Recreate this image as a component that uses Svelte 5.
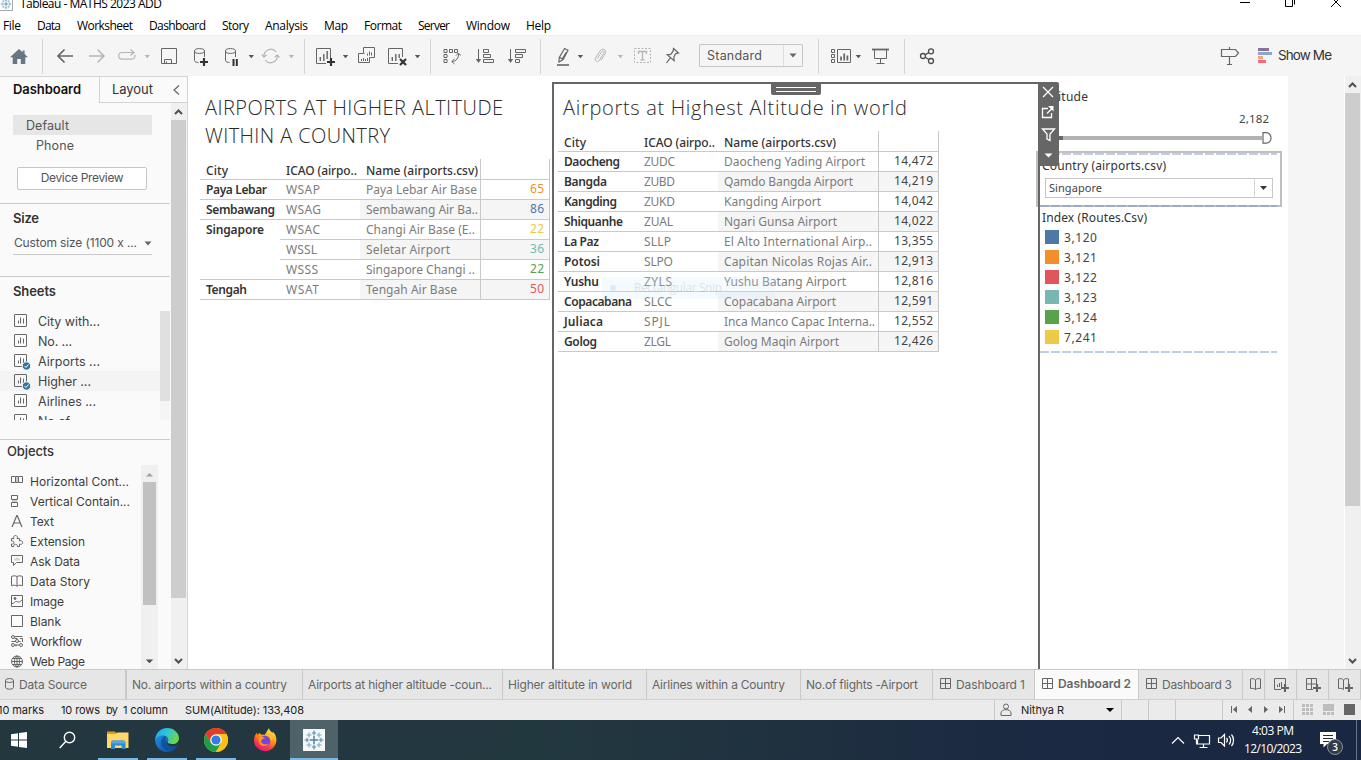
<script>
  function fit(node, width) {
    if (!width) return;
    const natural = node.getBoundingClientRect().width;
    const n = Math.max(1, node.textContent.length - 1);
    node.style.letterSpacing = `${(width - natural) / n}px`;
    node.style.width = `${width}px`;
  }

  const menu = [['File', 18], ['Data', 24], ['Worksheet', 56], ['Dashboard', 57], ['Story', 27], ['Analysis', 43], ['Map', 24], ['Format', 38], ['Server', 32], ['Window', 44], ['Help', 25]];

  const sheets = [
    ['City with...', 62, false], ['No. ...', 34, false], ['Airports ...', 62, true],
    ['Higher ...', 53, true], ['Airlines ...', 58, false], ['No.of ...', 46, false]
  ];

  const objects = [
    ['Horizontal Cont...', 99, 'h'], ['Vertical Contain...', 100, 'v'], ['Text', 24, 'text'],
    ['Extension', 55, 'ext'], ['Ask Data', 50, 'ask'], ['Data Story', 60, 'story'],
    ['Image', 34, 'image'], ['Blank', 31, 'blank'], ['Workflow', 52, 'flow'], ['Web Page', 55, 'web']
  ];

  const local = [
    ['Paya Lebar', 61, 'WSAP', 34, 'Paya Lebar Air Base', 111, '65', '#f28e2b', true],
    ['Sembawang', 69, 'WSAG', 35, 'Sembawang Air Ba..', 112, '86', '#4e79a7', true],
    ['Singapore', 58, 'WSAC', 34, 'Changi Air Base (E..', 109, '22', '#edc948', false],
    ['', 0, 'WSSL', 31, 'Seletar Airport', 84, '36', '#76b7b2', false],
    ['', 0, 'WSSS', 32, 'Singapore Changi ..', 109, '22', '#59a14f', true],
    ['Tengah', 41, 'WSAT', 33, 'Tengah Air Base', 91, '50', '#e15759', true]
  ];

  const world = [
    ['Daocheng', 56, 'ZUDC', 31, 'Daocheng Yading Airport', 141, '14,472'],
    ['Bangda', 43, 'ZUBD', 31, 'Qamdo Bangda Airport', 129, '14,219'],
    ['Kangding', 53, 'ZUKD', 31, 'Kangding Airport', 97, '14,042'],
    ['Shiquanhe', 59, 'ZUAL', 29, 'Ngari Gunsa Airport', 113, '14,022'],
    ['La Paz', 35, 'SLLP', 27, 'El Alto International Airp..', 148, '13,355'],
    ['Potosi', 36, 'SLPO', 29, 'Capitan Nicolas Rojas Air..', 148, '12,913'],
    ['Yushu', 35, 'ZYLS', 28, 'Yushu Batang Airport', 122, '12,816'],
    ['Copacabana', 68, 'SLCC', 28, 'Copacabana Airport', 112, '12,591'],
    ['Juliaca', 39, 'SPJL', 26, 'Inca Manco Capac Interna..', 151, '12,552'],
    ['Golog', 33, 'ZLGL', 27, 'Golog Maqin Airport', 115, '12,426']
  ];

  const legend = [['3,120', '#4e79a7'], ['3,121', '#f28e2b'], ['3,122', '#e15759'], ['3,123', '#76b7b2'], ['3,124', '#59a14f'], ['7,241', '#edc948']];

  const tabs = [
    ['No. airports within a country', 155, 176], ['Airports at higher altitude -coun...', 184, 200],
    ['Higher altitute in world', 124, 144], ['Airlines within a Country', 133, 154], ['No.of flights -Airport', 112, 132]
  ];
</script>

{#snippet t(text, w, cls = '')}<span class="t {cls}" use:fit={w}>{text}</span>{/snippet}
{#snippet caret(x, c = '#555')}<path d="M{x} 55h5.4l-2.7 3.2z" fill={c} stroke="none" />{/snippet}
{#snippet plus(x, y, c = '#333')}<path d="M{x - 4} {y}h8M{x} {y - 4}v8" stroke={c} stroke-width="2.2" />{/snippet}
{#snippet grid()}<svg width="12" height="12" viewBox="0 0 12 12" class="ln"><path d="M.5 .5h10v10H.5zM5.5 .5v10M.5 5.500h10" /></svg>{/snippet}
{#snippet tableau(s)}<svg width={s} height={s} viewBox="0 0 22 22" fill="none"><path stroke="#4b82a8" stroke-width="1.5" d="M11 7v8M7 11h8" /><path stroke="#4e90b4" stroke-width="1.1" d="M11 1.5v5M8.8 4h4.4M11 15.5v5M8.8 18h4.4M1.5 11h5M4 8.8v4.4M15.5 11h5M18 8.8v4.4" /><path stroke="#7faac2" stroke-width="1.1" d="M6 3.5v5M3.5 6h5M16 3.5v5M13.500 6h5M6 13.500v5M3.500 16h5M16 13.500v5M13.500 16h5" /></svg>{/snippet}

<div class="app">
  <header class="title">
    <span class="appicon">{@render tableau(12)}</span>
    {@render t('Tableau - MATHS 2023 ADD', 142)}
    <svg class="winctl" width="121" height="17" viewBox="1240 0 121 17" fill="none" stroke="#000"><path d="M1240 2.5h10M1285.500-1h7v7.500h-7zM1294.500-1v5.500M1331-3l10 10M1341-3l-10 10" /></svg>
  </header>
  <nav class="menu">{#each menu as [m, w]}{@render t(m, w)}{/each}</nav>

  <div class="toolbar">
    <svg width="43" height="40" viewBox="0 36 43 40"><path fill="#687583" d="M19 49l-9 8.200h2.700V64h4.500v-5h3.600v5h4.500v-6.800H28l-3.400-3.200V50.500h-2v1.700z" /><path d="M42.500 39v35" stroke="#d4d4d4" /></svg>
    <svg width="262" height="40" viewBox="43 36 262 40" class="ln">
      <path stroke-width="1.700" d="M73 56H58M64.500 49.500L58 56l6.500 6.500" />
      <g stroke="#b5b5b5"><path stroke-width="1.500" d="M89 56h15M97.500 49.500L104 56l-6.500 6.500" />
        <path stroke-width="1.200" d="M133.500 52.500h-11.500a3.300 3.300 0 0 0 0 6.600h9.800a3.300 3.300 0 0 0 3-4.500M130.500 49.500l3.500 3-3.500 3" /></g>
      {@render caret(144.600, '#b5b5b5')}
      <path d="M161.500 48.500h15v15h-15zM164.500 63.500v-4h7v4M166.500 63.500v-2" />
      <ellipse cx="199.500" cy="51" rx="5" ry="2.400" /><path d="M194.500 51v9.500c0 1.300 2 2 4 2M204.500 51v6" />{@render plus(204, 62)}
      <ellipse cx="230.500" cy="51" rx="5" ry="2.400" /><path d="M225.500 51v9.500c0 1.300 2 2 4 2M235.500 51v6" /><path stroke="#333" stroke-width="2" d="M233.500 59v7M236.800 59v7" />
      {@render caret(248.600)}
      <g stroke="#b5b5b5" stroke-width="1.200"><path d="M264 56.500a6.800 6.800 0 0 1 12.200-4.500M277.300 55.500a6.800 6.800 0 0 1-12.200 4.500" /><path d="M261.800 54.500l2.200 2.500 2.700-2M274.800 57l2.500-2 2.200 2.500" /></g>
      {@render caret(288.700, '#b5b5b5')}
      <path d="M304.500 39v35" stroke="#d4d4d4" />
    </svg>
    <svg width="126" height="40" viewBox="305 36 126 40" class="ln">
      <path d="M326 63.500h-9.500v-15h14V58" /><path stroke-width="1.400" d="M320.300 61v-4M323.800 61v-7M327.200 59v-8" />{@render plus(331, 62)}
      {@render caret(342.800)}
      <path d="M363.500 53v-5.500h11v10h-5M367.500 55.500v-2M369.500 55.500v-4M371.500 55.500v-3M363.500 53.500h-5v9h11v-5M361.500 61v-2M363.500 61v-3M365.500 61v-2M367.500 61v-3M363.500 53.500h1" />
      <path d="M398 63.500h-9.500v-15h14V57" /><path stroke-width="1.400" d="M392.300 61v-4M395.800 61v-7M399.200 58v-4" /><path stroke="#333" stroke-width="2.200" d="M400 59l6 6M406 59l-6 6" />
      {@render caret(414.800)}
      <path d="M430.500 39v35" stroke="#d4d4d4" />
    </svg>
    <svg width="110" height="40" viewBox="431 36 110 40" class="ln">
      <path d="M444 49.500h3v3h-3zM449.500 49.500h3v3h-3zM454.500 49.500h3v3h-3zM444 54.500h3v3h-3zM444 59.500h3v3h-3z" /><path d="M458.500 53.500c.5 4.500-2.500 8-6.500 8M456 55.500l2.500-2.500 2 2.500M454.500 59l-2.700 2.500 2.700 2.500" />
      <path d="M478.500 49v11M483.500 49.500h5v3h-5zM483.500 54.500h7v3h-7zM483.500 59.500h10v3h-10z" /><path d="M475.800 59h5.400l-2.700 4z" fill="#666" stroke="none" />
      <path d="M510.500 49v11M515.500 49.500h10v3h-10zM515.500 54.500h7v3h-7zM515.500 59.500h4v3h-4z" /><path d="M507.800 59h5.400l-2.700 4z" fill="#666" stroke="none" />
      <path d="M540.500 39v35" stroke="#d4d4d4" />
    </svg>
    <svg width="158" height="40" viewBox="541 36 158 40" class="ln">
      <path d="M564.500 48.500l3.500 1.700-5 9.600-4.100 2.200.4-4.500zM559.300 57.200l3.500 1.900M566 52.500l-3.300 5.800" stroke-width="1.200" /><path d="M557 65h12" stroke-width="1.600" />
      {@render caret(577.700)}
      <g stroke="#b5b5b5"><path d="M597.500 58.500l4-6.500c1.200-2 3.300-.8 2.400 1l-4.500 7.200c-1.900 2.800-5.400.7-3.900-2.200l4.700-7.300c2.300-3.300 7-.8 5.100 2.700l-4.200 6.800" />
      <path d="M634.500 48.500h16v14h-16z" stroke-dasharray="2 1.500" /><path stroke-width="1.300" d="M638.500 54v-2.500h8V54M642.500 51.500v8M640.500 59.800h4" /></g>
      {@render caret(617.700, '#b5b5b5')}
      <path d="M673.500 48.500l5 4.500-3 .8-1.600 3.200.2 3.700-6.900-5.900 3.500-.4 2.300-3zM670.300 57.800l-3.800 5.200" stroke-width="1.200" />
    </svg>
    <div class="std">{@render t('Standard', 55)}<i><svg width="8" height="5" viewBox="0 0 8 5"><path d="M.5.500h7L4 4.500z" fill="#666" /></svg></i></div>
    <svg width="102" height="40" viewBox="803 36 102 40" class="ln">
      <path d="M818.500 39v35M904.500 39v35" stroke="#d4d4d4" />
      <path d="M831.500 49.500h3v3h-3zM831.500 54.500h3v3h-3zM831.500 59.500h3v3h-3zM837.500 49.500h13v13h-13z" /><path stroke-width="1.700" d="M841 60.500v-4M844.200 60.500v-7M847.400 60.500v-5" />
      {@render caret(855.700)}
      <path stroke-width="1.800" d="M872 49.500h17" /><path d="M874.500 50v8.500h12V50M880.500 58.500v4.500M876.500 63.500h8" />
    </svg>
    <svg width="345" height="40" viewBox="905 36 345 40" class="ln">
      <g stroke="#4c4c4c" stroke-width="1.300"><circle cx="923" cy="56" r="2.500" /><circle cx="931" cy="51.300" r="2.500" /><circle cx="931" cy="61" r="2.500" /><path d="M925.200 54.700l3.600-2.100M925.200 57.300l3.600 2.200" /></g>
      <path d="M1221.500 49.500h14l3 3.500-3 3.500h-14zM1229.500 47v2.500M1229.500 56.500v8M1227 64.500h5" stroke-width="1.200" />
    </svg>
    <svg width="28" height="40" viewBox="1250 36 28 40"><path fill="#8a6f96" d="M1258 48h11v3h-11z" /><path fill="#86a8cf" d="M1258 52h14v3h-14z" /><path fill="#f5a673" d="M1258 56h5v3h-5z" /><path fill="#fb6a7b" d="M1258 60h8v3h-8z" /></svg>
    <div class="showme">{@render t('Show Me', 54)}</div>
  </div>

  <main>
    <aside>
      <div class="ptabs"><b>{@render t('Dashboard', 68)}</b><div>{@render t('Layout', 41)}<svg width="7" height="10" viewBox="0 0 7 10" class="ln"><path d="M6 .5L1 5l5 4.500" stroke-width="1.200" /></svg></div></div>
      <div class="pbody">
        <div class="pane">
          <section class="device">
            <div class="opt sel">{@render t('Default', 43)}</div>
            <div class="opt ph">{@render t('Phone', 38)}</div>
            <div class="btn">{@render t('Device Preview', 83)}</div>
          </section>
          <section class="size">
            <h4>{@render t('Size', 26)}</h4>
            <div class="combo">{@render t('Custom size (1100 x ...', 123)}<svg width="8" height="5" viewBox="0 0 8 5"><path d="M.5.500h7L4 4.500z" fill="#666" /></svg></div>
          </section>
          <section class="sheets">
            <h4>{@render t('Sheets', 43)}</h4>
            <div class="slist">
              <ul>
                {#each sheets as [name, w, used], i}
                  <li class:hover={i === 3}>
                    <svg width="24" height="20" viewBox="0 0 24 20" class="ln"><rect x="1.500" y="4.500" width="12" height="12" rx=".5" /><path d="M5.500 13.500v-3M7.500 13.500v-6M10.500 13.500v-5" />
                      {#if used}<circle cx="13.500" cy="16" r="4.200" fill="#31789c" stroke="#fafafa" /><path d="M11.500 16l1.500 1.500 2.500-3" stroke="#fff" />{/if}</svg>
                    {@render t(name, w)}
                  </li>
                {/each}
              </ul>
              <i class="sthumb"></i>
            </div>
          </section>
          <section class="objects">
            <h4>{@render t('Objects', 47)}</h4>
            <div class="olist">
              <ul>
                {#each objects as [name, w, kind]}
                  <li>
                    <svg width="20" height="20" viewBox="0 0 20 20" class="ln">
                      {#if kind === 'h'}<path d="M1.500 5.500h4v6h-4zM8.500 5.500h4v6h-4zM6 5.500h2M6 11.500h2" /><path fill="#ccc" stroke="none" d="M6 6h2v5H6z" />
                      {:else if kind === 'v'}<path d="M1.500 4.500h6v4h-6zM1.500 11.500h6v4h-6z" /><path fill="#ccc" stroke="none" d="M2 9h5v2H2z" />
                      {:else if kind === 'text'}<path d="M2 16L6.800 4.500h.4L12 16M4 12h6" stroke-width="1.200" />
                      {:else if kind === 'ext'}<path d="M1.500 7.500H4c-1-1.500 0-3 1.500-3s2.500 1.500 1.500 3h2.500V10c1.500-.8 3.200 0 3.200 1.500S11 13.800 9.500 13v2.500H7.300c.3-1.500-.6-2.200-1.800-2.200s-2 .8-1.700 2.200H1.500V13c2 .3 2.500-.5 2.500-1.500s-.8-1.700-2.500-1.400z" />
                      {:else if kind === 'ask'}<path d="M1.500 4.500h11v7h-6l-3 3v-3h-2z" /><path stroke="#aaa" d="M5 9.500v-2M7 9.500v-3M9 9.500v-2" />
                      {:else if kind === 'story'}<path d="M1.500 5.500c2-1 4-.8 5.500 0 1.500-.8 3.500-1 5.500 0v9.200c-2-.8-4-.6-5.500.4-1.500-1-3.500-1.200-5.500-.4zM7 5.500v9.500" />
                      {:else if kind === 'image'}<path d="M1.500 4.500h11v11h-11zM1.500 12.500c3 .5 3-2.500 5-2 1.800.6 2.500 1.500 6-2" /><circle cx="5" cy="7.500" r="1" fill="#666" />
                      {:else if kind === 'blank'}<path d="M1.500 4.500h11v11h-11z" />
                      {:else if kind === 'flow'}<circle cx="3" cy="6" r="1.500" /><circle cx="7" cy="10" r="1.500" /><circle cx="3" cy="14" r="1.500" /><circle cx="11" cy="14" r="1.500" /><path d="M4.500 5.500h8M4.500 7.500h3M10 7.500h2.500v3.500M1.500 10.500h4M8.500 10.500h2M5 14h4M6 15.500v-2" />
                      {:else}<circle cx="7" cy="10.500" r="5.500" /><ellipse cx="7" cy="10.500" rx="2.500" ry="5.500" /><path d="M1.500 10.500h11M2.500 7.500h9M2.500 13.500h9M7 5v11" />{/if}
                    </svg>
                    {@render t(name, w)}
                  </li>
                {/each}
              </ul>
              <div class="osb"><svg width="9" height="5" viewBox="0 0 9 5"><path d="M1 4.500h7L4.500 1z" fill="#a0a0a0" /></svg><i></i><svg width="9" height="5" viewBox="0 0 9 5"><path d="M.8.500h7.400L4.500 4.300z" fill="#505050" /></svg></div>
            </div>
          </section>
        </div>
        <div class="vsb psb"><svg width="9" height="6" viewBox="0 0 9 6"><path d="M1 5l3.500-3.500L8 5" /></svg><i></i><svg width="9" height="6" viewBox="0 0 9 6"><path d="M1 1l3.500 3.500L8 1" /></svg></div>
      </div>
    </aside>

    <section class="sheet one">
      <h2>{@render t('AIRPORTS AT HIGHER ALTITUDE', 298)}<br />{@render t('WITHIN A COUNTRY', 185)}</h2>
      <div class="grid g1">
        <div class="row head"><span>{@render t('City', 22)}</span><span>{@render t('ICAO (airpo..', 71)}</span><span>{@render t('Name (airports.csv)', 112)}</span><span></span></div>
        {#each local as r, i}
          <div class="row" class:band={i % 2 === 1}>
            <span class="city" class:open={!r[8]}>{@render t(r[0], r[1])}</span><span class="dim">{@render t(r[2], r[3])}</span><span class="dim nm">{@render t(r[4], r[5])}</span><span class="num" style:color={r[7]}>{@render t(r[6], 14)}</span>
          </div>
        {/each}
      </div>
    </section>

    <section class="sheet two">
      <div class="grip"></div>
      <h2>{@render t('Airports at Highest Altitude in world', 344)}</h2>
      <div class="grid g2">
        <div class="row head"><span>{@render t('City', 22)}</span><span>{@render t('ICAO (airpo..', 71)}</span><span>{@render t('Name (airports.csv)', 112)}</span><span></span></div>
        {#each world as r, i}
          <div class="row" class:band={i % 2 === 1}>
            <span class="city">{@render t(r[0], r[1])}</span><span class="dim">{@render t(r[2], r[3])}</span><span class="dim nm">{@render t(r[4], r[5])}</span><span class="num">{@render t(r[6], 39)}</span>
          </div>
        {/each}
      </div>
      <div class="snip"><i></i>{@render t('Rectangular Snip', 88)}</div>
      <div class="tools">
        <svg width="21" height="84" viewBox="0 0 21 84" fill="none" stroke="#fff" stroke-width="1.300"><path d="M5 5l10 10M15 5l-10 10M10 26.500H4.500v9h9V31M9 31.500l5-5" /><path d="M10 24h5.500v5.500z" fill="#fff" stroke="none" /><path d="M4.500 47h12l-4.500 5v6.500l-3-1.500v-5z" /><path d="M6.500 71.500h8l-4 4z" fill="#fff" stroke="none" /></svg>
      </div>
    </section>

    <section class="filters">
      <div class="lbl alt">{@render t('Altitude', 46)}</div>
      <div class="val">{@render t('2,182', 30)}</div>
      <div class="slider"><i></i><svg width="10" height="12" viewBox="0 0 10 12"><path d="M1 .7h3.500a4.500 5.200 0 0 1 0 10.500H1z" fill="#fff" stroke="#666" stroke-width="1.200" /></svg></div>
      <div class="country">
        <div class="dash"></div>
        <div class="lbl">{@render t('Country (airports.csv)', 124)}</div>
        <div class="pick">{@render t('Singapore', 53)}<i><svg width="7" height="4" viewBox="0 0 7 4"><path d="M0 0h7L3.500 4z" fill="#333" /></svg></i></div>
        <div class="dash low"></div>
      </div>
      <div class="lbl idx">{@render t('Index (Routes.Csv)', 105)}</div>
      {#each legend as [v, c]}<div class="key"><i style:background={c}></i>{@render t(v, 33)}</div>{/each}
      <div class="dash last"></div>
    </section>
    <div class="gutter"></div>
    <div class="vsb msb"><svg width="9" height="6" viewBox="0 0 9 6"><path d="M1 5l3.500-3.500L8 5" /></svg><i></i><svg width="9" height="6" viewBox="0 0 9 6"><path d="M1 1l3.500 3.500L8 1" /></svg></div>
  </main>

  <div class="tabs">
    <div class="src"><svg width="9" height="12" viewBox="0 0 9 12" class="ln"><ellipse cx="4.500" cy="2.500" rx="4" ry="2" /><path d="M.5 2.500v6.800c0 2.500 8 2.500 8 0V2.500" /></svg>{@render t('Data Source', 68)}</div>
    {#each tabs as [name, w, tw]}<div class="tab" style:width="{tw}px">{@render t(name, w)}</div>{/each}
    <div class="tab dash1">{@render grid()}{@render t('Dashboard 1', 69)}</div>
    <div class="tab dash2">{@render grid()}{@render t('Dashboard 2', 73)}</div>
    <div class="tab dash3">{@render grid()}{@render t('Dashboard 3', 70)}</div>
    <svg width="118" height="29" viewBox="1243 670 118 29" class="ln">
      <path d="M1250.500 679c2-.8 3.500-.3 5 .8 1.500-1.100 3-1.600 5-.8v9.500c-2-.5-3.500 0-5 1-1.500-1-3-1.500-5-1zM1255.500 680v9.500" />
      <path d="M1281 689.500h-6.500v-11h11v7M1277.500 687v-2.500M1279.500 687v-4M1281.500 687v-5" />{@render plus(1285, 688, '#666')}
      <path d="M1313 689.500h-6.500v-11h10v7M1311.500 678.500v10.500M1306.500 684h10" />{@render plus(1317, 688, '#666')}
      <path d="M1343.500 689.500c-1.500-1-3-1.500-5-1V679c2-.8 3.500-.3 5 .8 1.500-1.100 3-1.600 5-.8v6M1343.500 680v9.500" />{@render plus(1349, 688, '#666')}
      <path d="M1264.500 670v29M1296.500 670v29M1328.500 670v29M1360.500 670v29" stroke="#c9c9c9" />
    </svg>
  </div>

  <div class="status">
    {@render t('10 marks', 46)}{@render t('10 rows', 39)}{@render t('by', 12)}{@render t('1 column', 45)}{@render t('SUM(Altitude): 133,408', 119)}
    <div class="user"><svg width="12" height="14" viewBox="0 0 12 14" class="ln"><circle cx="6" cy="3.500" r="2.500" /><path d="M1 12.500V10c0-4.500 10-4.500 10 0v2.500z" /></svg>{@render t('Nithya R', 43)}<svg width="8" height="4" viewBox="0 0 8 4"><path d="M0 0h8L4 4z" /></svg></div>
    <svg width="239" height="20" viewBox="1122 700 239 20"><path d="M1148.500 700v20M1175.500 700v20M1222.500 700v20M1293.500 700v20" stroke="#c9c9c9" />
      <path fill="#666" d="M1231 706h1v7h-1zM1237 706v7l-4-3.500zM1252 706v7l-4-3.500zM1264 706v7l4-3.500zM1279 706v7l4-3.500zM1284 706h1v7h-1zM1344 704h11v11h-11z" />
      <path fill="#bdbdbd" d="M1302 704h3v3h-3zM1306 704h3v3h-3zM1310 704h3v3h-3zM1302 708h3v3h-3zM1306 708h3v3h-3zM1310 708h3v3h-3zM1302 712h3v3h-3zM1306 712h3v3h-3zM1310 712h3v3h-3zM1323 704h11v7h-11zM1323 712h3v3h-3zM1327 712h3v3h-3zM1331 712h3v3h-3z" /></svg>
  </div>

  <footer>
    <svg width="98" height="40" viewBox="0 720 98 40"><path fill="#fff" d="M11 734.300l7-1v6.200h-7zM19 733.100l8-1.100v7.500h-8zM11 740.500h7v6.200l-7-1zM19 740.500h8v7.500l-8-1.100z" /><g fill="none" stroke="#fff" stroke-width="1.400"><circle cx="69.500" cy="737.500" r="5.200" /><path d="M65.700 741.500l-6 6.500" /></g></svg>
    <div class="task on"><svg width="22" height="20" viewBox="0 0 22 20"><path fill="#e59a0f" d="M0 1.500h8l1.500 2H21V8H0z" /><path fill="#ffd868" d="M0 4h8.500L10 2.500h11.500V18H0z" /><path fill="#2f8ad0" d="M4 12.500a2 2 0 0 1 2-2h10.500a2 2 0 0 1 2 2V19h-3.800v-3.500H8V19H4z" /><path fill="#52a7e6" d="M4 12.500a2 2 0 0 1 2-2h10.500a2 2 0 0 1 2 2v1H4z" /></svg></div>
    <div class="task on"><svg width="24" height="24" viewBox="0 0 24 24"><defs><linearGradient id="e1" x1="0" y1="0" x2="1" y2=".4"><stop stop-color="#1fa2e0" /><stop offset=".5" stop-color="#2fc2df" /><stop offset="1" stop-color="#66d84f" /></linearGradient><linearGradient id="e2" x1="0" y1="0" x2="1" y2="1"><stop stop-color="#1d8fdf" /><stop offset="1" stop-color="#0c4a9a" /></linearGradient></defs><path fill="url(#e2)" d="M.1 11C1.500 8 5.500 6.500 9 7.500c2.500.7 4 2.500 4 4.500 0 1-.8 1.500-1 2.500-.2 2 2.500 4 6.500 4 1.600 0 3-.5 4-1a12 12 0 0 1-10.500 6.500C5 24 0 18.500.1 11z" /><path fill="url(#e1)" d="M.2 10.500C1.500 3.500 6.500 0 12 0c7 0 12 5 12 10 0 4-3 6-6 6-3.500 0-6-1-5.200-2.300 1.500-2-.3-6.200-4.800-6.200C4.500 7.500 1.500 9 .2 12z" /><path fill="#114a96" d="M9 8.500C5.500 10.500 5 17 8.500 20.500c3.700 3.700 10.500 2.500 14-3-4 2-10 1-11-3.500-.4-2-2-4-.2-5.200-.7-.4-1.500-.6-2.300-.3z" opacity=".75" /></svg></div>
    <div class="task on"><svg width="24" height="24" viewBox="0 0 24 24"><circle cx="12" cy="12" r="12" fill="#fbc116" /><path fill="#e33b2e" d="M1.600 6A12 12 0 0 1 22.400 6H12L6.800 15z" /><path fill="#1e9e4b" d="M1.600 6A12 12 0 0 0 11.800 24L17.200 15H6.800z" /><path fill="#fbc116" d="M22.400 6A12 12 0 0 1 11.800 24L17.200 15 12 6z" /><circle cx="12" cy="12" r="5.800" fill="#fff" /><circle cx="12" cy="12" r="4.600" fill="#2f7de9" /></svg></div>
    <div class="task"><svg width="24" height="24" viewBox="0 0 24 24"><defs><linearGradient id="f1" x1=".8" y1="0" x2=".3" y2="1"><stop stop-color="#fff44f" /><stop offset=".45" stop-color="#ff980e" /><stop offset=".75" stop-color="#ff3647" /><stop offset="1" stop-color="#e31587" /></linearGradient></defs><path fill="url(#f1)" d="M16 0c0 2 2 3.500 3.500 5 .3-.5.200-1 .2-1.500 5 5 4.500 11 1.300 15.500a11.300 11.300 0 0 1-17.700-.2C.5 15.500.5 11 2 7.500L4 4.500l.3 2.500L6.500 5l1.700 1.500 3.500.3C13.500 4 14.500 2.500 16 0z" /><circle cx="12" cy="13" r="5.300" fill="#7542e5" /><path fill="#ff980e" d="M5.500 9.500c3-.8 5-.5 6.500 1-2.500.2-3 1-4 2.500.5 3 4.500 4.500 7.500 2.500-2 4.500-10 3-10-3z" /><path fill="#ffbd2e" d="M13 7c3 1 5 3.500 5 6.500l2-4-3-4z" /></svg></div>
    <div class="task on act"><span>{@render tableau(22)}</span></div>
    <svg class="tray" width="72" height="40" viewBox="1170 720 72 40" fill="none" stroke="#fff" stroke-width="1.200"><path d="M1172 743.500l6-6 6 6" /><path d="M1199 735.500h10.500v8.500h-12v-4M1194.500 735h4v4h-4zM1196.500 739v5.500M1203.500 744v3M1199.500 747.500h8" /><path d="M1218.500 738h2.500l3.500-3.500v11.500l-3.500-3.500h-2.500zM1226.500 738c1 1.200 1 3.300 0 4.500M1229 736c2 2.500 2 6 0 8.500M1231.500 734.500c2.700 3.200 2.700 8.300 0 11.500" /></svg>
    <div class="clock">{@render t('4:03 PM', 42)}{@render t('12/10/2023', 58)}</div>
    <div class="note"><svg width="16" height="16" viewBox="0 0 16 16"><path fill="#fff" d="M0 0h16v12H7l-3.500 3.500V12H0z" /><path stroke="#1b2a41" d="M3 3.500h10M3 6.500h10M3 9.500h6" /></svg><b>3</b></div>
    <i class="peek"></i>
  </footer>
</div>

<style>
  :global(body) { margin: 0; overflow: hidden; background: #fff; }
  .app { width: 1361px; height: 760px; display: flex; flex-direction: column; overflow: hidden; font: 12px/18px Inter, Roboto, sans-serif; color: #444; }
  .app :global(*) { box-sizing: border-box; }
  .app > :global(*) { flex: none; }
  svg { flex: none; display: block; }
  .t { display: inline-block; white-space: pre; flex: none; }
  .ln { fill: none; stroke: #666; }
  ul, h2, h4 { margin: 0; padding: 0; list-style: none; font-weight: inherit; }
  b { font-weight: 600; }

  .title { height: 17px; display: flex; align-items: flex-start; font: 12px/16px "Open Sans", sans-serif; color: #000; overflow: hidden; }
  .title .t { margin-top: -4px; margin-left: 7px; }
  .appicon { width: 13px; height: 11px; border: 1px solid #aaa; border-top: 0; border-left: 0; overflow: hidden; display: flex; align-items: flex-end; justify-content: flex-end; }
  .winctl { margin-left: auto; }
  .menu { height: 18px; display: flex; gap: 16px; padding-left: 3px; font: 12px/18px "Open Sans", sans-serif; color: #000; }
  .toolbar { height: 41px; display: flex; padding-top: 0; background: #f5f5f5; border-top: 1px solid #eee; }
  .std { width: 104px; height: 23px; margin-top: 8px; border: 1px solid #c6c6c6; border-radius: 1px; display: flex; align-items: center; justify-content: space-between; padding-left: 7px; color: #555; font-size: 12.500px; }
  .std i { width: 19px; height: 21px; border-left: 1px solid #ddd; display: grid; place-items: center; }
  .showme { font-size: 13.500px; line-height: 39px; color: #333; }

  main { height: 593px; display: flex; overflow: hidden; }
  aside { width: 188px; background: #fafafa; border-right: 1px solid #d4d4d4; border-top: 1px solid #d4d4d4; display: flex; flex-direction: column; }
  .ptabs { height: 26px; display: flex; line-height: 25px; font-size: 13px; color: #333; }
  .ptabs b { width: 99px; padding-left: 13px; color: #111; }
  .ptabs div { flex: 1; border-left: 1px solid #d4d4d4; border-bottom: 1px solid #d4d4d4; padding: 0 7px 0 12px; display: flex; justify-content: space-between; align-items: center; }
  .pbody { flex: 1; display: flex; min-height: 0; }
  .pane { width: 170px; margin-right: 1px; overflow: hidden; }
  .device { height: 101px; padding-top: 12px; border-bottom: 1px solid #c9c9c9; color: #555; font-size: 12.500px; }
  .opt { margin: 0 18px 0 13px; height: 20px; line-height: 21px; padding-left: 13px; }
  .sel { background: #e6e6e6; }
  .ph { padding-left: 23px; }
  .btn { margin: 12px 0 0 17px; width: 130px; height: 23px; line-height: 20px; font-size: 12px; border: 1px solid #c6c6c6; border-radius: 2px; text-align: center; background: #fff; }
  h4 { font-weight: 600; font-size: 13px; color: #333; line-height: 20px; padding-left: 13px; }
  .size { height: 73px; padding-top: 4px; border-bottom: 1px solid #c9c9c9; }
  .combo { margin: 4px 18px 0 13px; height: 23px; border-bottom: 1px solid #c9c9c9; padding-left: 1px; display: flex; justify-content: space-between; align-items: center; color: #555; }
  .sheets { height: 163px; padding-top: 4px; border-bottom: 1px solid #c9c9c9; }
  .slist { display: flex; height: 109px; margin-top: 10px; overflow: hidden; }
  .slist ul { width: 160px; }
  .slist li { height: 20px; padding-left: 13px; display: flex; line-height: 21px; font-size: 12.500px; }
  .slist svg { margin: -1px 1px 0 0; }
  .hover { background: #f4f4f4; }
  .sthumb { width: 10px; height: 109px; background: linear-gradient(#e0e0e0 90px, #f5f5f5 90px); }
  .objects h4 { padding-left: 7px; line-height: 23px; font-weight: 500; }
  .olist { display: flex; margin-top: 2px; }
  .olist ul { width: 141px; padding-top: 6px; }
  .olist li { height: 20px; padding-left: 10px; display: flex; line-height: 21px; color: #3c3c3c; }
  .osb { width: 17px; height: 204px; background: #f0f0f0; display: flex; flex-direction: column; align-items: center; padding: 7px 0 5px; }
  .osb i { width: 13px; height: 123px; margin: 5px 0 auto; background: #c1c1c1; }
  .vsb { width: 16px; background: #f0f0f0; display: flex; flex-direction: column; align-items: flex-start; }
  .vsb svg { fill: none; stroke: #505050; stroke-width: 2; margin-left: 3px; }
  .vsb i { width: 15px; background: #cdcdcd; margin-bottom: auto; }
  .psb { padding: 6px 0 5px; }
  .psb i { height: 478px; margin-top: 5px; }
  .msb { padding: 6px 0 5px; margin-left: 1px; }
  .msb i { height: 413px; margin-top: 5px; }

  .sheet { font-family: "Noto Sans", "Open Sans", sans-serif; }
  .sheet h2 { font: 300 20px/28px "Open Sans", sans-serif; color: #2a2a2a; }
  .one { width: 364px; padding: 18px 0 0 12px; }
  .one h2 { padding-left: 5px; height: 65px; }
  .row { display: grid; height: 20px; line-height: 19px; }
  .row > span { border-bottom: 1px solid #c9c9c9; padding-left: 6px; overflow: hidden; white-space: nowrap; }
  .row > span:last-child { border-left: 1px solid #c9c9c9; border-right: 1px solid #c9c9c9; }
  .g1 .row { grid-template-columns: 80px 80px 120px 70px; }
  .g2 .row { grid-template-columns: 80px 80px 160px 61px; }
  .row.head { height: 21px; line-height: 23px; font-weight: 500; color: #333; }
  .city { font-weight: 600; color: #333; }
  .city.open { border-bottom-color: transparent !important; }
  .dim { color: #7c7c7c; font-weight: 400; }
  .band .nm, .band .num { background: #f5f5f5; }
  .row > .num { text-align: right; padding-right: 5px; padding-left: 0; line-height: 18px; color: #444; }
  .two { position: relative; width: 488px; height: 600px; margin-top: 6px; border: 2px solid #666; padding: 0 0 0 4px; }
  .grip { width: 50px; height: 11px; margin: 0 0 0 213px; background: #666; border-radius: 0 0 2px 2px; background-image: linear-gradient(#fff, #fff), linear-gradient(#fff, #fff); background-size: 40px 1px; background-repeat: no-repeat; background-position: 5px 3px, 5px 7px; }
  .two h2 { padding-left: 5px; margin-top: -1px; height: 37px; }
  .snip { position: absolute; left: 48px; top: 193px; width: 173px; height: 22px; background: rgba(205, 232, 252, .22); font: 12px/22px "Open Sans", sans-serif; color: rgba(120, 120, 120, .2); padding-left: 8px; display: flex; align-items: center; }
  .snip i { width: 6px; height: 6px; border-radius: 3px; background: rgba(120, 150, 180, .15); margin-right: 18px; }
  .tools { position: absolute; left: 484px; top: -2px; width: 21px; height: 84px; background: #666; border-radius: 0 2px 2px 0; z-index: 3; }

  .filters { width: 248px; font-family: "Noto Sans", "Open Sans", sans-serif; color: #444; }
  .lbl { color: #333; padding-left: 2px; line-height: 20px; height: 20px; font-weight: 400; }
  .alt { margin-top: 11px; }
  .val { height: 20px; line-height: 20px; padding: 2px 0 0 199px; font-size: 11.500px; }
  .slider { height: 18px; padding: 3px 0 0 19px; display: flex; align-items: center; }
  .slider i { width: 203px; height: 4px; background: linear-gradient(90deg, #666 4px, #b3b3b3 4px); }
  .country { margin: 6px 0 0 -4px; width: 246px; height: 56px; border: 2px solid #c0c0c0; }
  .country .lbl { padding-left: 4px; margin-top: 1px; }
  .dash { height: 2px; width: 237px; margin-left: 2px; background: repeating-linear-gradient(90deg, #c2cde3 0 9px, transparent 9px 11px); }
  .low { margin-top: 7px; background: repeating-linear-gradient(90deg, #9dabc8 0 9px, transparent 9px 11px); }
  .pick { margin: 2px 0 0 7px; width: 228px; height: 20px; border: 1px solid #c6c6c6; display: flex; justify-content: space-between; align-items: center; padding-left: 3px; font-size: 11px; }
  .pick i { width: 18px; height: 18px; border-left: 1px solid #d4d4d4; display: grid; place-items: center; }
  .idx { margin-top: 1px; }
  .key { height: 20px; display: flex; align-items: flex-start; padding-left: 5px; gap: 5px; line-height: 20px; }
  .key i { width: 14px; height: 14px; margin-top: 2px; }
  .last { margin: 3px 0 0; }
  .gutter { width: 56px; background: #f5f5f5; }

  .tabs { height: 31px; display: flex; background: #e6e6e6; border-top: 1px solid #c9c9c9; border-bottom: 1px solid #d0d0d0; color: #666; line-height: 30px; overflow: hidden; }
  .src { width: 127px; border-right: 2px solid #c9c9c9; padding-left: 5px; display: flex; gap: 5px; }
  .src svg { margin-top: 8px; }
  .tab { border-right: 1px solid #c9c9c9; padding-left: 5px; display: flex; flex: none; }
  .tab svg { margin: 8px 4px 0 2px; }
  .dash1 { width: 102px; }
  .dash2 { width: 104px; background: #fafafa; font-weight: 600; line-height: 27px; }
  .dash3 { width: 104px; }
  .status { height: 20px; display: flex; background: #ebebeb; font-size: 11px; line-height: 20px; color: #222; }
  .status > .t:nth-child(1) { margin-left: -2px; }
  .status > .t:nth-child(2) { margin-left: 17px; }
  .status > .t:nth-child(3) { margin-left: 6px; }
  .status > .t:nth-child(4) { margin-left: 5px; }
  .status > .t:nth-child(5) { margin-left: 17px; }
  .user { margin-left: auto; width: 128px; border-left: 1px solid #c9c9c9; border-right: 1px solid #c9c9c9; display: flex; align-items: center; padding: 0 7px 0 5px; }
  .user .t { margin: 0 auto 0 9px; }

  footer { height: 40px; display: flex; background: linear-gradient(90deg, #23373f, #22383f 40%, #1f3040 60%, #1b2941 75%, #1a2742); color: #fff; }
  .task { width: 40px; height: 40px; margin-right: 9px; display: grid; place-items: center; border-bottom: 2px solid transparent; padding-top: 2px; }
  .on { border-bottom-color: #76b9ed; }
  .act { width: 48px; margin-left: -4px; background: #4f6169; padding-top: 1px; }
  .act span { width: 22px; height: 22px; background: #f7f7f7; }
  .tray { margin-left: auto; }
  .clock { width: 62px; display: flex; flex-direction: column; align-items: center; font: 12px/18px "Open Sans", sans-serif; padding-top: 2px; }
  .note { position: relative; width: 52px; padding: 12px 0 0 16px; }
  .note b { position: absolute; left: 23px; top: 19px; width: 16px; height: 16px; border-radius: 8px; background: #333b48; border: 1px solid #8a9099; font: 600 10px/14px "Open Sans", sans-serif; text-align: center; }
  .peek { width: 5px; border-left: 1px solid #6a7485; }
</style>
